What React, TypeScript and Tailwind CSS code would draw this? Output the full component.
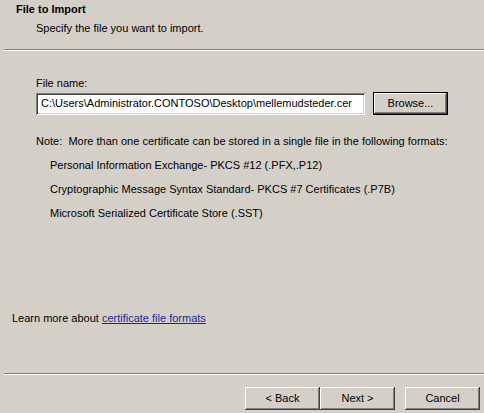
const raised =
  'bg-[#d4d0c8] shadow-[inset_-1px_-1px_#404040,inset_1px_1px_#ffffff,inset_-2px_-2px_#808080,inset_2px_2px_#d4d0c8]';

function Button({ label, isDefault = false, className = '' }: { label: string; isDefault?: boolean; className?: string }) {
  return (
    <button
      className={`${raised} h-[23px] w-[75px] text-[11px] text-black flex items-center justify-center ${
        isDefault ? 'outline outline-1 outline-black -outline-offset-1 shadow-[inset_-2px_-2px_#404040,inset_2px_2px_#ffffff,inset_-3px_-3px_#808080]' : ''
      } ${className}`}
    >
      {label}
    </button>
  );
}

function Separator({ className = '' }: { className?: string }) {
  return <div className={`ml-1 h-[2px] border-t border-[#808080] border-b border-b-white ${className}`} />;
}

export default function App() {
  const formats = [
    'Personal Information Exchange- PKCS #12 (.PFX,.P12)',
    'Cryptographic Message Syntax Standard- PKCS #7 Certificates (.P7B)',
    'Microsoft Serialized Certificate Store (.SST)',
  ];

  return (
    <div
      className="w-[484px] h-[413px] bg-[#d4d0c8] text-black text-[11px] leading-[13px] flex flex-col overflow-hidden"
      style={{ fontFamily: '"Liberation Sans", Arial, sans-serif' }}
    >
      {/* Header */}
      <div className="h-[49px] pt-[3px]">
        <div className="pl-4 font-bold">File to Import</div>
        <div className="pl-9 mt-[6px]">Specify the file you want to import.</div>
      </div>
      <Separator />

      {/* Body */}
      <div className="flex-1 flex flex-col">
        <div className="pl-9 mt-[26px]">File name:</div>
        <div className="pl-9 mt-[2px] flex items-center gap-[8px]">
          <div className="w-[329px] h-[22px] bg-white flex items-center pl-[5px] shadow-[inset_1px_1px_#808080,inset_-1px_-1px_#ffffff,inset_2px_2px_#404040,inset_-2px_-2px_#d4d0c8]">
            C:\Users\Administrator.CONTOSO\Desktop\mellemudsteder.cer
          </div>
          <Button label="Browse..." isDefault />
        </div>

        <div className="pl-9 mt-[20px]">Note:&nbsp; More than one certificate can be stored in a single file in the following formats:</div>
        <div className="pl-[50px] mt-[11px] flex flex-col gap-[11px]">
          {formats.map((f) => (
            <div key={f}>{f}</div>
          ))}
        </div>

        <div className="mt-auto mb-[48px] pl-3">
          Learn more about{' '}
          <a href="#" className="text-[#1a2a9c] underline">
            certificate file formats
          </a>
        </div>
      </div>

      <Separator />
      <div className="h-[38px] flex items-start justify-end pt-[12px] pr-[4px]">
        <Button label="< Back" />
        <Button label="Next >" />
        <Button label="Cancel" className="ml-[10px]" />
      </div>
    </div>
  );
}
